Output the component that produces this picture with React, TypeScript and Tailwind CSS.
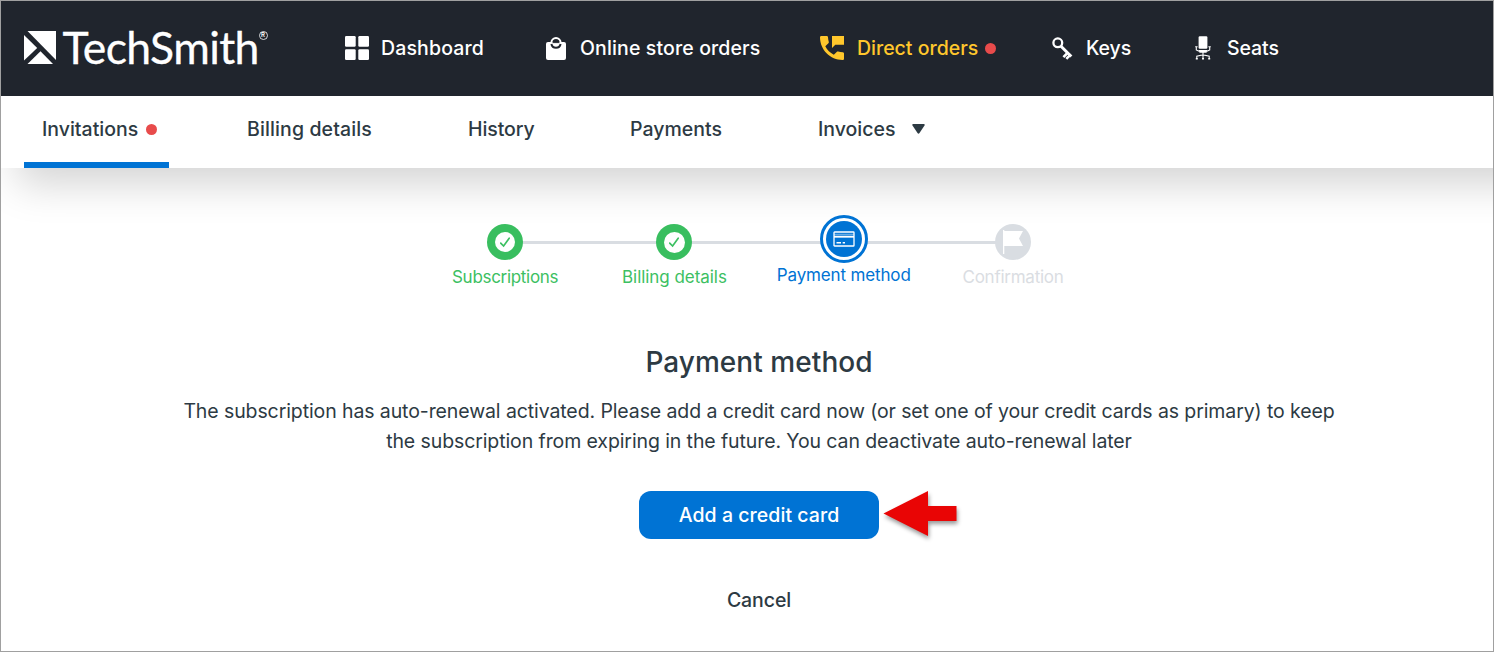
import type { ReactNode } from "react";
import clsx from "clsx";

function Logo() {
  return (
    <div className="flex h-[40px] w-[245px] items-start text-white">
      <svg width="33" height="33" viewBox="0 0 33 33" className="mt-[2px] shrink-0" fill="currentColor">
        <path d="M3.5 0H32V29Z" />
        <path d="M0 4L13.2 17L0 29.5Z" />
        <path d="M16.5 20.2L29 33H3.5Z" />
      </svg>
      <span className="ml-[5.5px] w-[195px] shrink-0 font-['Lato',sans-serif] text-[44.5px] leading-[36px] tracking-[-0.6px] [-webkit-text-stroke:0.3px_white]">
        TechSmith
      </span>
      <span className="mt-[2px] ml-px flex size-[9px] shrink-0 items-center justify-center rounded-full border border-white/80 text-[6px] leading-none font-semibold">
        R
      </span>
    </div>
  );
}

function DashboardIcon() {
  return (
    <svg width="24" height="24" viewBox="0 0 24 24" fill="currentColor" className="-mt-px">
      <rect width="10.7" height="10.7" rx="1.2" />
      <rect x="13.3" width="10.7" height="10.7" rx="1.2" />
      <rect y="13.3" width="10.7" height="10.7" rx="1.2" />
      <rect x="13.3" y="13.3" width="10.7" height="10.7" rx="1.2" />
    </svg>
  );
}

function BagIcon() {
  return (
    <svg width="20" height="23" viewBox="0 0 20 23" fill="none">
      <rect y="5" width="20" height="18" rx="2" fill="currentColor" />
      <circle cx="10" cy="5.7" r="4.6" stroke="currentColor" strokeWidth="2" />
      <path d="M5.4 7a4.7 4.7 0 0 0 9.2 0" stroke="#20252d" strokeWidth="2" />
      <path d="M6.6 5.6h6.8" stroke="#20252d" strokeWidth="1" />
    </svg>
  );
}

function PhoneIcon() {
  return (
    <svg width="24" height="24" viewBox="0 0 24 24" fill="currentColor" className="-mt-px">
      <path d="M12 0H24V8.7H15.3L12 12Z" />
      <path d="M1.3 0H6.6C7.4 0 7.9.5 8 1.3c.1 1.6.3 3 .8 4.6.1.5 0 1-.4 1.4L5.3 10.3c2 3.8 4.7 6.5 8.5 8.5l2.9-2.9c.4-.4.9-.5 1.4-.4 1.5.5 3 .7 4.6.8.7 0 1.3.6 1.3 1.3V22.7c0 .7-.6 1.3-1.3 1.3C10.2 24 0 13.8 0 1.3 0 .6.6 0 1.3 0Z" />
    </svg>
  );
}

function KeyIcon() {
  return (
    <svg width="21" height="23" viewBox="0 0 21 23" fill="none" stroke="currentColor">
      <circle cx="5.8" cy="5.8" r="4.4" strokeWidth="2.3" />
      <path d="M9 9.2L19.3 19.5" strokeWidth="3" />
      <path d="M15.5 16L11.4 20.1M17.8 18.3L14.3 21.8" strokeWidth="2.6" />
    </svg>
  );
}

function SeatIcon() {
  return (
    <svg width="16" height="24" viewBox="0 0 16 24" fill="none" stroke="currentColor" className="-mt-px">
      <rect x="3.6" y=".3" width="8.8" height="12.5" rx="1.2" fill="currentColor" stroke="none" />
      <path d="M.2 10.7H2.6M13.4 10.7H15.8M1.3 10.7V14L4 15.3M14.7 10.7V14L12 15.3" strokeWidth="1.1" />
      <path d="M3.5 14h9l-1 2.8h-7Z" fill="currentColor" stroke="none" />
      <path d="M8 16V22.5M1.8 22V20.3L6 19.3H10L14.2 20.3V22" strokeWidth="1.1" />
      <path d="M.8 22.7H2.8M7 22.7H9M13.2 22.7H15.2" strokeWidth="1.6" />
    </svg>
  );
}

function CardIcon() {
  return (
    <svg width="22" height="16" viewBox="0 0 22 16" fill="none" stroke="currentColor">
      <rect x="1" y="1" width="20" height="14" rx=".6" strokeWidth="1.3" />
      <path d="M1 3.3H21" strokeWidth="1" opacity=".5" />
      <path d="M1 5.7H21" strokeWidth="1.9" />
      <path d="M3.5 11.7H8M9.7 11.7H12" strokeWidth="1.5" />
    </svg>
  );
}

function FlagIcon() {
  return (
    <svg width="20" height="24" viewBox="0 0 20 24" fill="currentColor">
      <path d="M0 0H1.3V1H20L16 8.5L20 16H1.3V24H0Z" />
    </svg>
  );
}

function Dot({ className }: { className?: string }) {
  return <span className={clsx("size-[11px] shrink-0 rounded-full bg-[#e84b4b]", className)} />;
}

type NavItem = {
  label: string;
  icon: ReactNode;
  box: string;
  iconBox: string;
  text: string;
  active?: boolean;
};

const mainNav: NavItem[] = [
  { label: "Dashboard", icon: <DashboardIcon />, box: "w-[201px]", iconBox: "w-9", text: "tracking-[0.15px]" },
  { label: "Online store orders", icon: <BagIcon />, box: "w-[274px]", iconBox: "w-[34px]", text: "tracking-[0.13px]" },
  { label: "Direct orders", icon: <PhoneIcon />, box: "w-[232px]", iconBox: "w-[37px]", text: "", active: true },
  { label: "Keys", icon: <KeyIcon />, box: "w-[143px]", iconBox: "w-[34px]", text: "tracking-[-0.1px]" },
  { label: "Seats", icon: <SeatIcon />, box: "w-[100px]", iconBox: "w-[32px]", text: "tracking-[-0.1px]" },
];

const tabs = [
  { label: "Invitations", box: "w-[145px] mr-15", text: "", active: true },
  { label: "Billing details", box: "w-[161px] mr-15", text: "tracking-[0.12px]" },
  { label: "History", box: "w-[102px] mr-15", text: "tracking-[-0.1px]" },
  { label: "Payments", box: "w-[128px] mr-15", text: "" },
  { label: "Invoices", box: "w-[145px]", text: "", menu: true },
];

function Header() {
  return (
    <header className="relative z-10 flex h-[95px] shrink-0 items-center bg-[#20252d] pl-[23px]">
      <Logo />
      <nav className="ml-[76px] flex items-center">
        {mainNav.map((item) => (
          <a
            key={item.label}
            href="#"
            className={clsx("flex h-6 items-center", item.box, item.active ? "text-[#ffc72c]" : "text-white")}
          >
            <span className={clsx("flex shrink-0 items-center", item.iconBox)}>{item.icon}</span>
            <span className={clsx("text-[19.5px] font-medium whitespace-nowrap", item.text)}>{item.label}</span>
            {item.active && <Dot className="ml-[7px]" />}
          </a>
        ))}
      </nav>
    </header>
  );
}

function Tabs() {
  return (
    <nav className="-mr-12 flex h-[72px] shrink-0 bg-white pl-[23px] text-[#2d3a43] shadow-[16px_16px_40px_rgba(0,0,0,0.173)]">
      {tabs.map((tab) => (
        <a
          key={tab.label}
          href="#"
          className={clsx("flex border-b-[6px] pl-[18px]", tab.box, tab.active ? "border-[#0073d4]" : "border-transparent")}
        >
          <span className="flex h-[66px] items-center">
            <span className={clsx("mt-0.5 text-[19.5px] font-medium whitespace-nowrap", tab.text)}>{tab.label}</span>
            {tab.active && <Dot className="ml-2" />}
            {tab.menu && (
              <svg width="13" height="10" viewBox="0 0 13 10" className="ml-[17px]" fill="currentColor">
                <path d="M1.2 0H11.8Q13.2.1 12.5 1.4L7.5 9Q6.5 10.3 5.5 9L.5 1.4Q-.2.1 1.2 0Z" />
              </svg>
            )}
          </span>
        </a>
      ))}
    </nav>
  );
}

function DoneStep({ label, text, inner }: { label: string; text: string; inner: string }) {
  return (
    <li className="flex w-[169.3px] shrink-0 flex-col items-center text-[#3cc062]">
      <span className="relative z-10 flex size-9 items-center justify-center rounded-full bg-[#39be5f]">
        <span className={clsx("flex items-center justify-center rounded-full bg-white", inner)}>
          <svg width="10" height="11" viewBox="0 0 10 11" fill="none" stroke="currentColor" strokeWidth="1.7">
            <path d="M.7 6.1L3.6 9L9.2 1.2" strokeLinecap="round" />
          </svg>
        </span>
      </span>
      <span className={clsx("mt-[5px] text-[17px] leading-6 whitespace-nowrap", text)}>{label}</span>
    </li>
  );
}

function Stepper() {
  return (
    <div className="mt-12 ml-[24px] flex h-[75px] shrink-0 justify-center">
      <ol className="relative mt-2 flex w-[677px]">
        <li aria-hidden className="absolute top-[17px] left-[85px] h-[3px] w-[508px] bg-[#d9dde2]" />
        <DoneStep label="Subscriptions" text="tracking-[-0.3px]" inner="size-5" />
        <DoneStep label="Billing details" text="tracking-[-0.05px]" inner="size-[21px]" />
        <li className="-mt-[9px] flex w-[169.3px] shrink-0 flex-col items-center text-[#0073d4]">
          <span className="relative z-10 flex size-12 items-center justify-center rounded-full border-[3px] border-[#0073d4] bg-white">
            <span className="flex size-9 items-center justify-center rounded-full bg-[#0073d4] text-white">
              <CardIcon />
            </span>
          </span>
          <span className="text-[17px] leading-6 tracking-[-0.15px] whitespace-nowrap">Payment method</span>
        </li>
        <li className="flex w-[169.3px] shrink-0 flex-col items-center text-[#dadde2]">
          <span className="relative z-10 flex size-9 items-center justify-center rounded-full bg-[#d9dde2] text-white">
            <FlagIcon />
          </span>
          <span className="mt-[5px] text-[17px] leading-6 tracking-[-0.25px] whitespace-nowrap">Confirmation</span>
        </li>
      </ol>
    </div>
  );
}

function Arrow() {
  return (
    <svg
      width="74"
      height="46"
      viewBox="0 0 74 46"
      className="absolute top-0 left-[244px] overflow-visible drop-shadow-[1px_3px_2px_rgba(0,0,0,0.4)]"
      fill="#e90505"
    >
      <path d="M.5 22.5L45 0V15H73.5V30H45V45Z" />
    </svg>
  );
}

export default function App() {
  return (
    <div className="flex h-[652px] w-[1494px] flex-col overflow-hidden border border-[#a0a0a0] bg-white font-['Inter',sans-serif] text-[#2d3a43]">
      <Header />
      <Tabs />
      <Stepper />
      <main className="ml-[24px] flex flex-col items-center text-center">
        <h1 className="mt-[53px] text-[28px] leading-9 font-medium tracking-[0.05px]">Payment method</h1>
        <p className="mt-4 text-[19.5px] leading-[30px] tracking-[-0.1px] whitespace-nowrap">
          The subscription has auto-renewal activated. Please add a credit card now (or set one of your credit cards as
          primary) to keep
          <br />
          the subscription from expiring in the future. You can deactivate auto-renewal later
        </p>
        <div className="relative mt-[35px]">
          <button className="block h-12 w-60 rounded-xl bg-[#0073d4] pt-0.5 text-[19.5px] font-medium tracking-[0.05px] text-white">
            Add a credit card
          </button>
          <Arrow />
        </div>
        <button className="mt-[46px] text-[19.5px] leading-[30px] font-medium tracking-[-0.1px]">Cancel</button>
      </main>
    </div>
  );
}
